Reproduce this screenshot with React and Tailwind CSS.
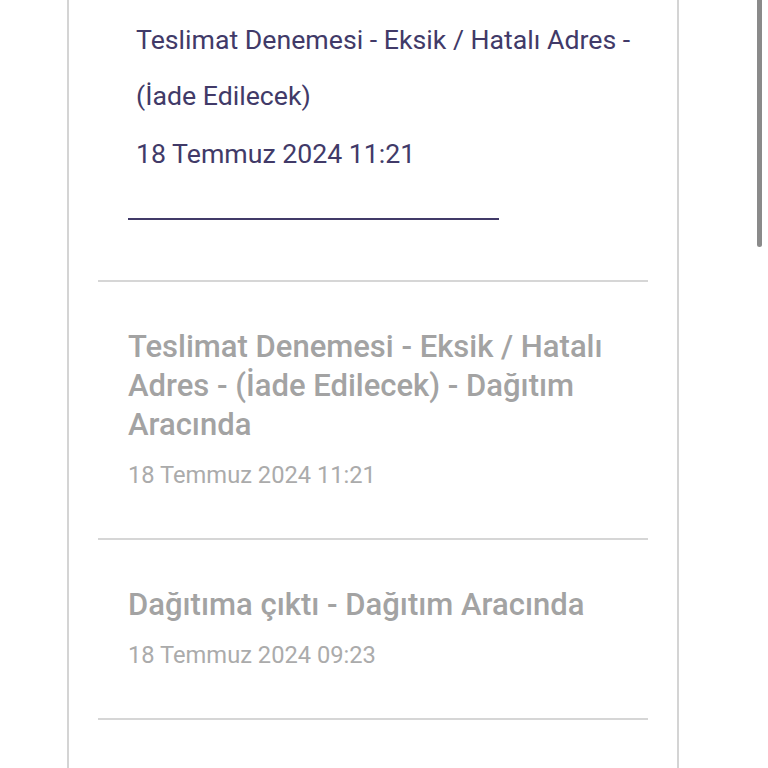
export default function App() {
  const items = [
    {
      title: "Teslimat Denemesi - Eksik / Hatalı Adres - (İade Edilecek) - Dağıtım Aracında",
      date: "18 Temmuz 2024 11:21",
    },
    {
      title: "Dağıtıma çıktı - Dağıtım Aracında",
      date: "18 Temmuz 2024 09:23",
    },
  ];

  return (
    <div
      className="relative h-[768px] w-[768px] overflow-hidden bg-white"
      style={{ fontFamily: "Roboto, 'Noto Sans', sans-serif" }}
    >
      <div className="ml-[67px] h-full w-[612px] border-x-2 border-[#d4d4d4]">
        {/* current status */}
        <div className="pl-[67px] pr-[36px] pt-[12px]">
          <p className="text-[26.7px] leading-[56px] text-[#413a68]">
            Teslimat Denemesi - Eksik / Hatalı Adres - (İade Edilecek)
          </p>
          <p className="mt-[2px] text-[26.7px] leading-[56px] text-[#413a68]">
            18 Temmuz 2024 11:21
          </p>
          <div className="-ml-[8px] mt-[36px] h-[2px] w-[371px] bg-[#413a68]" />
        </div>

        <div className="mx-[29px] mt-[60px] h-[2px] bg-[#d6d6d6]" />

        {items.map((it, i) => (
          <div key={i}>
            <div className="px-[59px] pt-[45px] pb-[49px]">
              <p className="text-[31px] font-medium leading-[39px] text-[#a3a3a3]">
                {it.title}
              </p>
              <p className="mt-[17px] text-[23.7px] leading-[28px] text-[#ababab]">
                {it.date}
              </p>
            </div>
            <div className="mx-[29px] h-[2px] bg-[#d6d6d6]" />
          </div>
        ))}
      </div>

      {/* scrollbar thumb */}
      <div className="absolute right-[6px] top-0 h-[247px] w-[5px] rounded-b-full bg-[#8a8a8a]" />
    </div>
  );
}
